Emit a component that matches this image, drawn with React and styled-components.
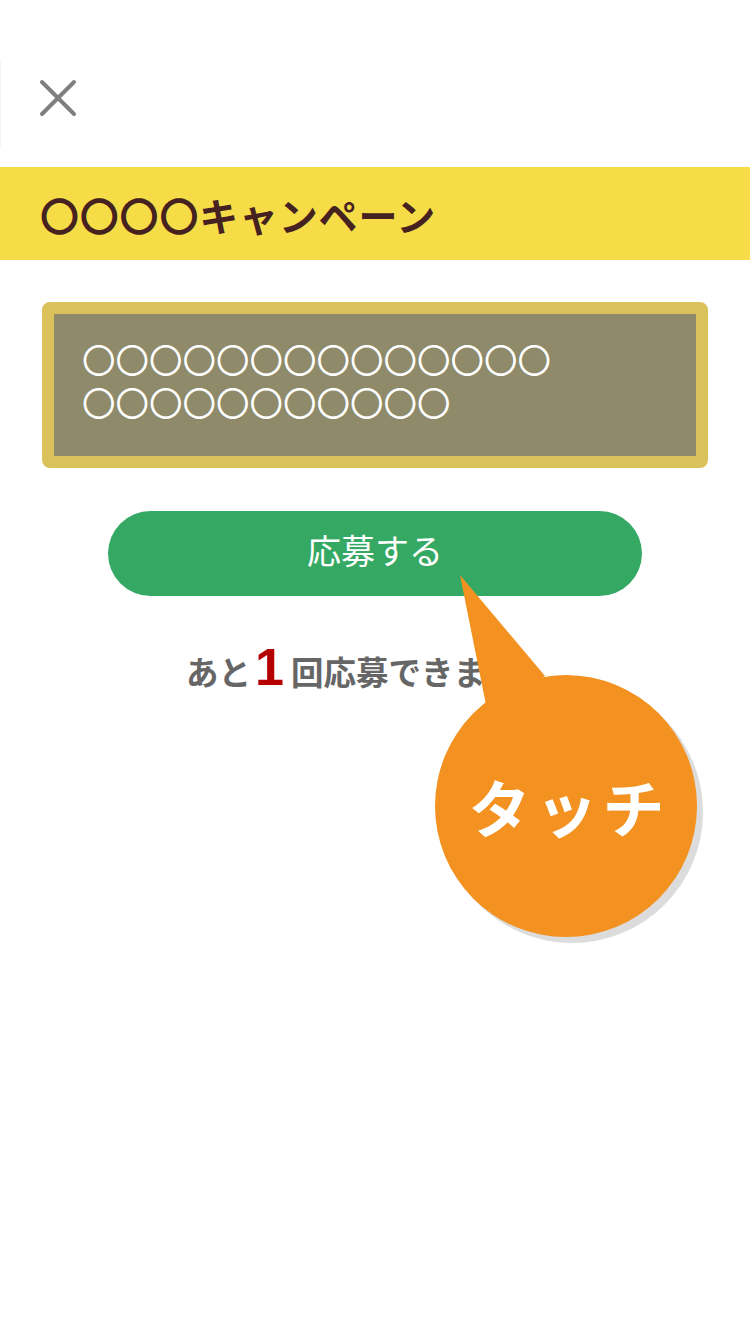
import styled, { createGlobalStyle } from "styled-components";

const GlobalStyle = createGlobalStyle`
  html, body {
    margin: 0;
    padding: 0;
    background: #fff;
  }
  body {
    font-family: "Noto Sans CJK JP", "Noto Sans", sans-serif;
  }
`;

const Page = styled.div`
  position: relative;
  width: 750px;
  min-height: 1334px;
  overflow: hidden;
`;

const Header = styled.header`
  height: 167px;
  display: flex;
  align-items: flex-start;
  padding: 79px 0 0 39px;
  box-sizing: border-box;
  position: relative;
  &::before {
    content: "";
    position: absolute;
    left: 0;
    top: 62px;
    width: 1px;
    height: 84px;
    background: #eef3f3;
  }
`;

const CloseButton = styled.button`
  border: 0;
  background: none;
  padding: 0;
  width: 38px;
  height: 38px;
  cursor: pointer;
  svg {
    display: block;
  }
`;

const TitleBar = styled.div`
  height: 93px;
  background: #f6dc47;
  display: flex;
  align-items: center;
  padding-left: 40px;
`;

const Title = styled.h1`
  margin: 0;
  font-size: 39px;
  font-weight: 700;
  color: #45221f;
  letter-spacing: 0.8px;
  line-height: 1;
  padding-top: 2px;
`;

const Content = styled.main`
  padding: 42px 42px 0;
`;

const NoticeBox = styled.div`
  box-sizing: border-box;
  height: 166px;
  border: 12px solid #dac15a;
  border-radius: 8px;
  background: #8e8a6a;
  padding: 23px 28px;
  color: #fff;
  font-family: "Noto Sans CJK JP", sans-serif;
  font-size: 33.5px;
  font-weight: 400;
  line-height: 43px;
`;

const Line = styled.div`
  white-space: nowrap;
  height: 43px;
`;

const ApplyButton = styled.button`
  display: block;
  margin: 43px auto 0;
  width: 534px;
  height: 85px;
  padding: 0 0 8px;
  border: 0;
  border-radius: 43px;
  background: #35a964;
  color: #fff;
  font-family: "Noto Sans CJK JP", sans-serif;
  font-size: 34px;
  font-weight: 400;
  cursor: pointer;
`;

const Remaining = styled.p`
  margin: 44px 0 0;
  padding-left: 144px;
  display: flex;
  align-items: baseline;
  color: #666;
  font-size: 32.5px;
  font-weight: 700;
  line-height: 54px;
`;

const Count = styled.span`
  font-family: "Liberation Sans", Arial, sans-serif;
  color: #b40000;
  font-size: 52px;
  font-weight: 700;
  margin: 0 7px 0 4px;
`;

const Bubble = styled.div`
  position: absolute;
  left: 430px;
  top: 570px;
  width: 280px;
  height: 380px;
  svg {
    display: block;
  }
`;

const BubbleLabel = styled.span`
  position: absolute;
  left: 8px;
  top: 236px;
  width: 262px;
  transform: translateY(-50%);
  text-align: center;
  color: #fff;
  font-size: 62px;
  font-weight: 700;
  letter-spacing: 5px;
  line-height: 1;
`;

function CloseIcon() {
  return (
    <svg width="38" height="38" viewBox="0 0 38 38">
      <path
        d="M3 3 L35 35 M35 3 L3 35"
        stroke="#7f7f7f"
        strokeWidth="4"
        strokeLinecap="round"
      />
    </svg>
  );
}

function TouchBubble() {
  // bubble coords relative to (430, 570)
  return (
    <Bubble>
      <svg width="280" height="380" viewBox="0 0 280 380">
        <circle cx="142" cy="242" r="131" fill="#dcdcdc" />
        <polygon points="30,5 56,135 115,106" fill="#f39221" />
        <circle cx="136" cy="236" r="131" fill="#f39221" />
      </svg>
      <BubbleLabel>タッチ</BubbleLabel>
    </Bubble>
  );
}

export default function App() {
  return (
    <Page>
      <GlobalStyle />
      <Header>
        <CloseButton aria-label="close">
          <CloseIcon />
        </CloseButton>
      </Header>
      <TitleBar>
        <Title>〇〇〇〇キャンペーン</Title>
      </TitleBar>
      <Content>
        <NoticeBox>
          <Line>〇〇〇〇〇〇〇〇〇〇〇〇〇〇</Line>
          <Line>〇〇〇〇〇〇〇〇〇〇〇</Line>
        </NoticeBox>
        <ApplyButton>応募する</ApplyButton>
        <Remaining>
          あと<Count>1</Count>回応募できます。
        </Remaining>
      </Content>
      <TouchBubble />
    </Page>
  );
}
